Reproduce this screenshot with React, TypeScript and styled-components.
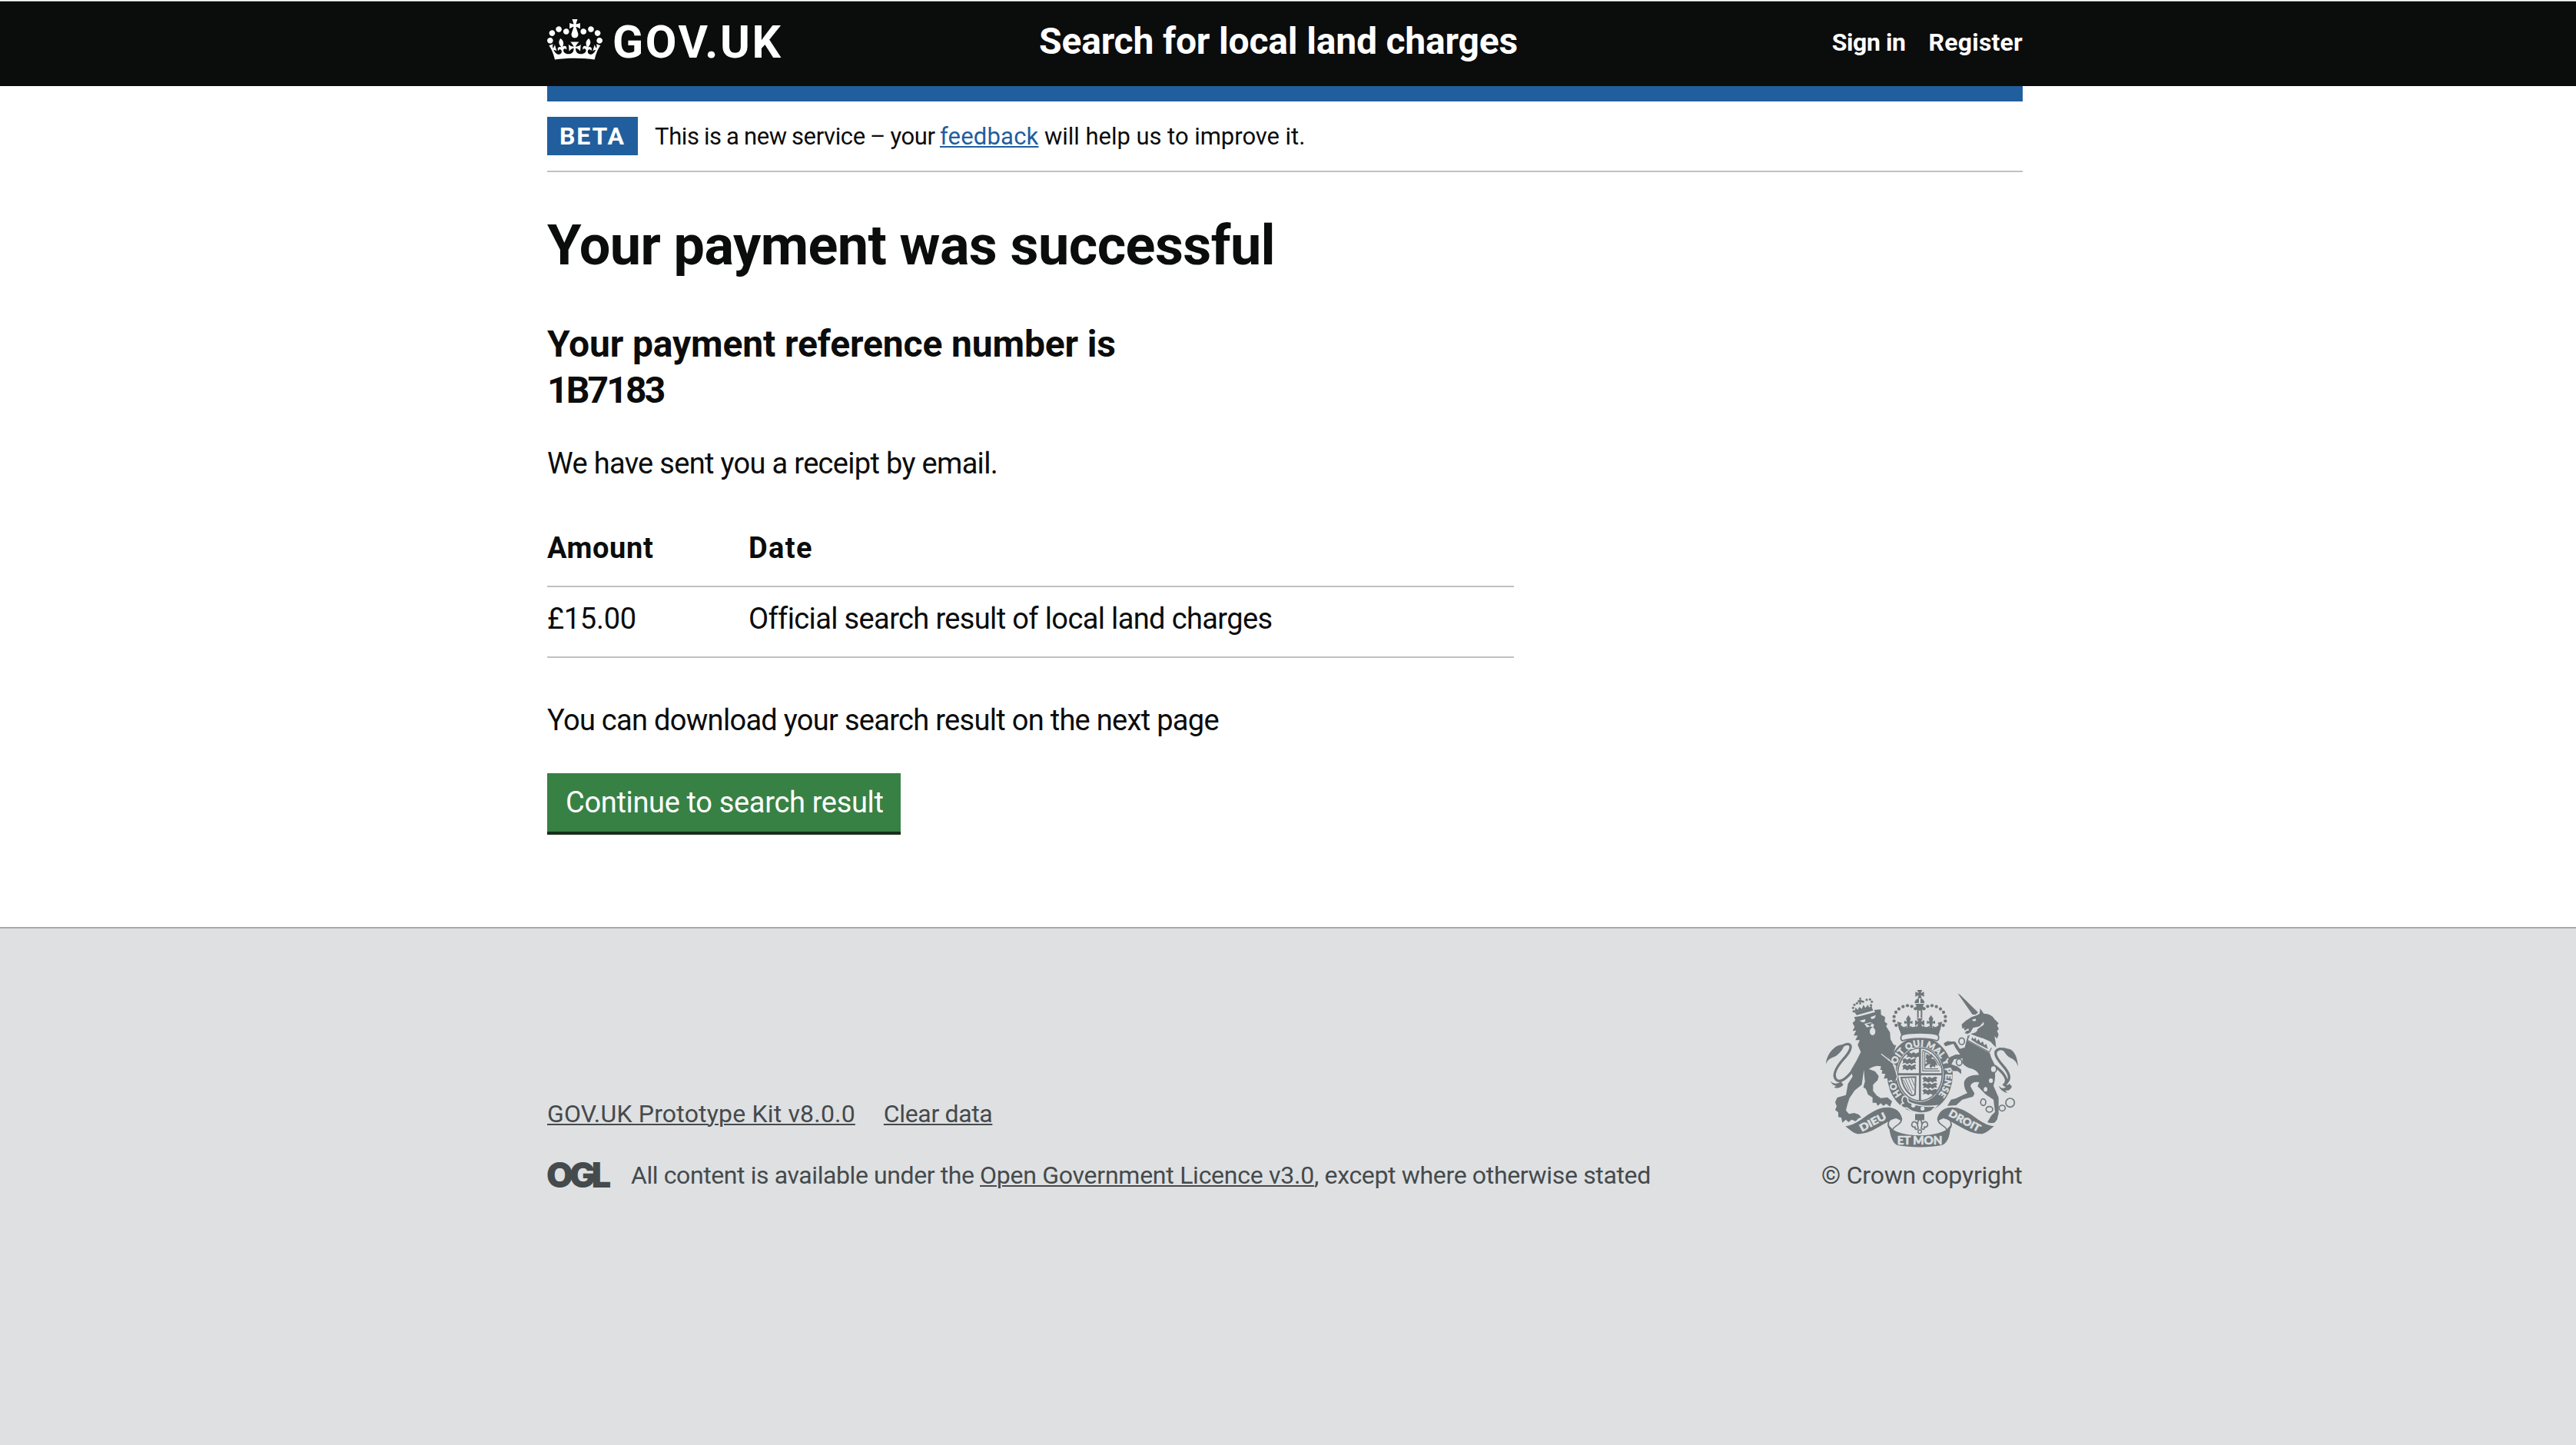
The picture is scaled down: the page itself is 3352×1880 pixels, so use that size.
import React from "react";
import styled, { createGlobalStyle } from "styled-components";

const ink = "#0b0c0c";
const footerInk = "#454a4c";
const footerBg = "#dee0e2";
const crestGrey = "#6f777b";
const blue = "#215e9e";
const rule = "#bfc1c3";

const GlobalStyle = createGlobalStyle`
  *, *::before, *::after { box-sizing: border-box; }
  body {
    margin: 0;
    background: #fff;
    color: ${ink};
    font-family: Roboto, "Liberation Sans", Arial, sans-serif;
    -webkit-font-smoothing: antialiased;
  }
`;

type Track = { $track?: number };

const Page = styled.div`
  display: flex;
  flex-direction: column;
  min-height: 1880px;
  border-top: 1px solid #fff;
`;

const Container = styled.div`
  width: 1920px;
  margin: 0 auto 0 712px;
`;

const Header = styled.header`
  height: 111px;
  border-top: 1px solid #b1b4b6;
  background: ${ink};
  color: #fff;
`;

const HeaderInner = styled(Container)`
  display: flex;
  align-items: flex-start;
`;

const LogoLink = styled.a`
  display: flex;
  flex: 0 0 640px;
  gap: 13px;
  padding-top: 23px;
  color: #fff;
`;

const CrownSvg = styled.svg`
  display: block;
  width: 72px;
  height: 53px;
`;

const LogoText = styled.span`
  font-size: 59px;
  font-weight: 700;
  line-height: 60px;
  letter-spacing: 2.6px;
`;

const ServiceName = styled.a`
  flex: 1;
  margin-top: 22px;
  font-size: 48px;
  font-weight: 700;
  line-height: 60px;
  letter-spacing: -0.17px;
`;

const Nav = styled.nav`
  display: flex;
  gap: 30px;
  margin-top: 33px;
`;

const NavLink = styled.a<Track>`
  font-size: 32px;
  font-weight: 700;
  line-height: 40px;
  letter-spacing: ${(p) => p.$track ?? 0}px;
`;

const BlueBar = styled.div`
  height: 20px;
  background: ${blue};
`;

const PhaseBanner = styled.div`
  display: flex;
  align-items: center;
  gap: 22px;
  height: 92px;
  padding: 20px 0;
  border-bottom: 2px solid ${rule};
`;

const Tag = styled.strong`
  width: 118px;
  padding: 0 16px;
  background: ${blue};
  color: #fff;
  font-size: 32px;
  line-height: 50px;
  letter-spacing: 1.9px;
`;

const PhaseText = styled.span`
  padding-top: 2px;
  font-size: 31px;
  line-height: 50px;
  white-space: pre;
`;

const Tracked = styled.span<Track & { $word?: number }>`
  letter-spacing: ${(p) => p.$track ?? 0}px;
  word-spacing: ${(p) => p.$word ?? 0}px;
`;

const Link = styled.a<Track & { $color: string }>`
  color: ${(p) => p.$color};
  letter-spacing: ${(p) => p.$track ?? 0}px;
  text-decoration: underline;
  text-decoration-thickness: 2px;
  text-underline-offset: 2px;
`;

const Main = styled.main`
  width: 1258px;
  height: 982px;
  padding-top: 56px;
`;

const Title = styled.h1`
  margin: 0 0 58px;
  font-size: 72px;
  line-height: 80px;
  letter-spacing: -0.58px;
`;

const Subtitle = styled.h2`
  margin: 0 0 40px;
  font-size: 48px;
  line-height: 60px;
  letter-spacing: -0.14px;
`;

const Paragraph = styled.p<Track>`
  margin: 0;
  font-size: 38px;
  line-height: 50px;
  letter-spacing: ${(p) => p.$track ?? 0}px;
`;

const Table = styled.div`
  margin: 44px 0 56px;
`;

const TableRow = styled.div<{ $head?: boolean }>`
  display: grid;
  grid-template-columns: 262px 1fr;
  padding: 16px 0 24px;
  border-bottom: 2px solid ${rule};
  font-size: 38px;
  font-weight: ${(p) => (p.$head ? 700 : 400)};
  line-height: 50px;
`;

const Button = styled.button`
  display: block;
  width: 460px;
  height: 80px;
  margin: 44px 0 0;
  padding: 13px 0 13px 24px;
  border: 0;
  border-bottom: 4px solid #14301a;
  background: #388144;
  color: #fff;
  font: 400 38px/50px Roboto, "Liberation Sans", sans-serif;
  letter-spacing: -0.33px;
  text-align: left;
  white-space: nowrap;
`;

const Footer = styled.footer`
  flex: 1;
  border-top: 2px solid #a1acb2;
  background: ${footerBg};
  color: ${footerInk};
  font-size: 32px;
  line-height: 40px;
`;

const FooterInner = styled(Container)`
  display: flex;
  justify-content: space-between;
  padding-top: 78px;
`;

const FooterMeta = styled.div`
  padding-top: 143px;
`;

const FooterLinks = styled.div`
  display: flex;
  gap: 37px;
  margin-bottom: 40px;
`;

const Licence = styled.div`
  display: flex;
  white-space: pre;
`;

const OglLogo = styled.span`
  width: 110px;
  margin-left: -1px;
  font-family: Inter, sans-serif;
  font-size: 45px;
  font-weight: 900;
  line-height: 40px;
  letter-spacing: -5px;
`;

const Copyright = styled.div`
  display: flex;
  flex-direction: column;
  width: 262px;
  letter-spacing: -0.2px;
  white-space: nowrap;
`;

const CrestSvg = styled.svg`
  display: block;
  width: 262px;
  height: 210px;
  margin-bottom: 13px;
`;

function Crown() {
  return (
    <CrownSvg viewBox="0 0 132 97" preserveAspectRatio="none" aria-hidden="true">
      <path
        fill="currentColor"
        fillRule="evenodd"
        d="M25 30.2c3.5 1.5 7.7-.2 9.1-3.7 1.5-3.6-.2-7.8-3.9-9.2-3.6-1.4-7.6.3-9.1 3.9-1.4 3.5.3 7.5 3.9 9zM9 39.5c3.6 1.5 7.8-.2 9.2-3.7 1.5-3.6-.2-7.8-3.9-9.1-3.6-1.5-7.6.2-9.1 3.8-1.4 3.5.3 7.5 3.8 9zM4.4 57.2c3.5 1.5 7.7-.2 9.1-3.8 1.5-3.6-.2-7.7-3.9-9.1-3.5-1.5-7.6.3-9.1 3.8-1.4 3.5.3 7.6 3.9 9.1zm38.3-21.4c3.5 1.5 7.7-.2 9.1-3.8 1.5-3.6-.2-7.7-3.9-9.1-3.6-1.5-7.6.3-9.1 3.8-1.3 3.6.4 7.7 3.9 9.1zm64.4-5.6c-3.6 1.5-7.8-.2-9.1-3.7-1.5-3.6.2-7.8 3.8-9.2 3.6-1.4 7.7.3 9.2 3.9 1.3 3.5-.4 7.5-3.9 9zm15.9 9.3c-3.6 1.5-7.7-.2-9.1-3.7-1.5-3.6.2-7.8 3.7-9.1 3.6-1.5 7.7.2 9.2 3.8 1.5 3.5-.3 7.5-3.8 9zm4.7 17.7c-3.6 1.5-7.8-.2-9.2-3.8-1.5-3.6.2-7.7 3.9-9.1 3.6-1.5 7.7.3 9.2 3.8 1.3 3.5-.4 7.6-3.9 9.1zM89.3 35.8c-3.6 1.5-7.8-.2-9.2-3.8-1.4-3.6.2-7.7 3.9-9.1 3.6-1.5 7.7.3 9.2 3.8 1.4 3.6-.3 7.7-3.9 9.1zM69.7 17.7l8.9 4.7V9.3l-8.9 2.8c-.2-.3-.5-.6-.9-.9L72.4 0H59.6l3.5 11.2c-.3.3-.6.5-.9.9l-8.8-2.8v13.1l8.8-4.7c.3.3.6.7.9.9l-5 15.4v.1c-.2.8-.4 1.6-.4 2.4 0 4.1 3.1 7.5 7 8.1h.2c.3 0 .7.1 1 .1.4 0 .7 0 1-.1h.2c4-.6 7.1-4.1 7.1-8.1 0-.8-.1-1.7-.4-2.4V34l-5.1-15.4c.4-.2.7-.6 1-.9zM66 92.8c16.9 0 32.8 1.1 47.1 3.2 4-16.9 8.9-26.7 14-33.5l-9.6-3.4c1 4.9 1.1 7.2 0 10.2-1.5-1.4-3-4.3-4.2-8.7L108.6 76c2.8-2 5-3.2 7.5-3.3-4.4 9.4-10 11.9-13.6 11.2-4.3-.8-6.3-4.6-5.6-7.9 1-4.7 5.7-5.9 8-.5 4.3-8.7-3-11.4-7.6-8.8 7.1-7.2 7.9-13.5 2.1-21.1-8 6.1-8.1 12.3-4.5 20.8-4.7-5.4-12.1-2.5-9.5 6.2 3.4-5.2 7.9-2 7.2 3.1-.6 4.3-6.4 7.8-13.5 7.2-10.3-.9-10.9-8-11.2-13.8 2.5-.5 7.1 1.8 11 7.3L80.2 60c-4.1 4.4-8 5.3-12.3 5.4 1.4-4.4 8-11.6 8-11.6H55.5s6.4 7.2 7.9 11.6c-4.2-.1-8-1-12.3-5.4l1.4 16.4c3.9-5.5 8.5-7.7 10.9-7.3-.3 5.8-.9 12.8-11.1 13.8-7.2.6-12.9-2.9-13.5-7.2-.7-5 3.8-8.3 7.1-3.1 2.7-8.7-4.6-11.6-9.4-6.2 3.7-8.5 3.6-14.7-4.6-20.8-5.8 7.6-5 13.9 2.2 21.1-4.7-2.6-11.9.1-7.7 8.8 2.3-5.5 7.1-4.2 8.1.5.7 3.3-1.3 7.1-5.7 7.9-3.5.7-9-1.8-13.5-11.2 2.5.1 4.7 1.3 7.5 3.3l-4.7-15.4c-1.2 4.4-2.7 7.2-4.3 8.7-1.1-3-.9-5.3 0-10.2l-9.5 3.4c5 6.9 9.9 16.7 14 33.5 14.8-2.1 30.8-3.2 47.7-3.2z"
      />
    </CrownSvg>
  );
}

const crownPearls = [
  [322, 192], [314, 175], [314, 158], [321, 141], [333, 128], [349, 119], [366, 115], [383, 118], [397, 127],
];

const smallPearls = [
  [156, 137], [154, 124], [159, 112], [169, 106], [193, 100], [207, 92], [220, 91], [227, 100], [224, 113],
];

const lion =
  "M152 183 L163 172 L158 160 L182 156 L240 140 L236 132 L262 130 L263 151 L279 160 L277 178 L288 186 L283 196 L298 220 L300 246 L312 268 L322 270 L304 288 L292 300 L290 318 L310 345 L320 378 L322 404 L312 411 L304 402 L292 406 L288 396 L277 397 L284 378 L270 380 L274 366 L260 366 L263 352 L246 350 L232 354 L215 362 L240 372 L254 390 L250 406 L232 424 L232 448 L246 466 L262 476 L288 473 L306 488 L298 510 L284 498 L272 506 L262 496 L250 506 L244 494 L230 494 L230 474 L212 462 L204 440 L194 434 L199 412 L197 392 L188 424 L160 446 L140 476 L132 500 L126 524 L138 538 L158 534 L176 540 L186 552 L176 554 L164 566 L148 560 L136 570 L126 560 L112 572 L108 552 L96 550 L96 532 L84 522 L90 508 L84 492 L92 474 L126 464 L134 420 L152 392 L146 366 L166 332 L184 296 L172 268 L180 250 L163 250 L172 232 L156 232 L166 212 L152 214 L160 198 Z";

const unicornHead =
  "M638 152 L648 146 L650 126 L664 146 Q680 146 690 152 Q702 158 706 168 L722 184 L716 192 L723 206 L716 214 L722 228 L716 244 L706 234 L710 256 L712 278 L700 266 L690 256 L664 244 L640 236 L612 226 L632 220 Q640 214 640 206 L664 190 L664 178 L648 196 L622 202 L612 220 L600 226 L590 222 L596 214 L606 212 L604 204 L590 212 L586 204 L596 200 L580 204 L578 188 L594 174 L616 160 Z";

const unicornBody =
  "M602 230 L640 252 L686 294 Q690 310 694 320 L712 356 L708 380 Q710 404 702 428 L722 474 L722 536 L716 560 L706 572 L690 574 L678 570 L694 544 L708 530 L702 482 L672 462 L640 430 L646 414 Q616 410 612 430 L628 458 L622 470 L580 482 L556 504 L522 506 L536 482 L554 478 L600 456 Q584 436 588 410 Q600 384 646 386 Q640 366 604 358 Q584 348 580 336 L582 318 L548 324 L538 344 L562 354 L576 366 L576 382 L562 370 L544 370 L524 342 L528 318 L556 306 L576 308 L554 280 L546 262 L514 272 L508 264 L522 254 L552 256 L570 284 L590 278 Z";

function Crest() {
  return (
    <CrestSvg viewBox="30 48 786 630" aria-hidden="true" fill={crestGrey}>
      <g fill="none" stroke={crestGrey}>
        <path strokeWidth="10" d="M154 366 C132 396 104 420 88 404 C72 386 90 354 116 324 C142 296 152 272 138 266 C124 262 108 274 96 284" />
        <path strokeWidth="10" d="M706 350 C744 378 764 408 744 424 C752 432 758 432 768 424 M744 424 C776 402 764 378 736 346 C708 314 700 292 726 284 C742 282 752 292 760 300" />
      </g>
      <path d="M48 344 C50 308 78 270 110 268 L118 272 C114 290 92 310 78 316 C62 322 52 330 48 344 Z" />
      <path d="M66 410 C76 420 92 424 106 410 L116 424 C104 440 88 438 80 434 L88 428 C76 426 70 420 66 410 Z" />
      <path d="M798 354 C796 320 786 296 768 286 L738 278 C744 300 756 314 774 322 C788 330 794 340 798 354 Z" />
      <path d="M722 428 C734 440 746 440 754 430 L774 428 C770 446 756 448 748 446 L756 456 C740 452 728 442 722 428 Z" />

      <path d={lion} />
      <g fill={footerBg}>
        <path d="M179 174 L201 168 L202 177 L192 181 Z M222 160 L243 152 L238 164 L226 168 Z" />
        <path d="M198 186 L222 180 L236 190 L232 202 L222 196 L208 200 Z" />
        <ellipse cx="230" cy="216" rx="11" ry="15" />
        <path d="M196 366 L200 412 L192 436 L188 424 Z" />
      </g>
      <path d="M206 187 L228 183 L220 196 Z" />
      <path d="M160 142 L228 124 L232 134 L168 152 Z M158 142 L164 122 L172 132 L178 120 L188 128 L194 112 L202 124 L212 112 L216 122 L226 116 L228 124 Z" />
      <path d="M178 84 L186 84 L184 94 L190 94 L190 102 L184 101 L186 110 L178 110 L178 101 L172 102 L172 94 L179 94 Z" />
      {smallPearls.map(([x, y]) => (
        <circle key={`${x}-${y}`} cx={x} cy={y} r="4.6" />
      ))}

      <path d="M563 68 L571 72 L642 142 L632 150 L620 150 Z" />
      <path d={unicornHead} />
      <path d="M618 170 L632 166 L634 174 L624 176 Z" fill={footerBg} />
      <path d={unicornBody} />
      <path d="M606 228 L700 284 L688 300 L600 252 Z" fill={footerBg} />
      <path d="M608 230 L600 250 L686 296 L694 280" fill="none" stroke={crestGrey} strokeWidth="3.5" />
      <path d="M616 248 L618 238 L626 246 L632 240 L636 254 L644 246 L652 262 L660 254 L666 270 L674 264 L680 284 L640 264 Z" />

      <ellipse cx="415" cy="385" rx="134" ry="152" fill={footerBg} />
      <path d="M290 298 L322 270 L300 330 L290 318 Z" />
      <ellipse cx="415" cy="385" rx="128" ry="148" />
      <ellipse cx="415" cy="383" rx="92" ry="108" fill={footerBg} />
      <ellipse cx="415" cy="383" rx="87" ry="103" fill="none" stroke={crestGrey} strokeWidth="5" />
      <path d="M411 280 h8 v206 h-8 Z M328 379 h174 v8 h-174 Z" />
      <path d="M426 290 V370 H492 M434 296 V362 H486 M426 290 Q470 306 492 350" fill="none" stroke={crestGrey} strokeWidth="3.5" />
      <path d="M440 304 l12 6 8 -6 6 10 -8 8 12 2 8 10 6 16 -8 -4 -2 10 -10 -4 -6 8 -6 -8 4 -10 -10 4 -12 8 -2 -8 12 -8 -8 -6 6 -6 -4 -8 Z" />
      {[298, 322, 346].map((y) => (
        <path key={y} d={`M${y === 298 ? 362 : 346} ${y + 4} l10 -6 10 6 8 -6 8 6 14 -6 4 4 -4 6 4 10 -10 -2 -8 6 -8 -6 -8 6 -10 -6 -10 4 4 -8 Z`} />
      ))}
      {[394, 418, 442].map((y) => (
        <path key={y} d={`M424 ${y + 4} l10 -6 10 6 8 -6 8 6 14 -6 10 4 -6 6 4 10 -10 -2 -8 6 -8 -6 -8 6 -10 -6 -12 4 4 -8 Z`} />
      ))}
      <path d="M342 396 L398 394 L396 462 Q384 470 376 460 Q350 440 342 396 Z" fill="none" stroke={crestGrey} strokeWidth="6" />
      <path d="M358 400 L384 458 M370 400 L390 446 M382 400 L394 428 M350 404 L372 448" stroke={crestGrey} strokeWidth="3" />

      <path id="garter" d="M344 463 A99 111 0 1 1 483 467" fill="none" />
      <text fill={footerBg} stroke={footerBg} strokeWidth="1.4" fontFamily="Lato, sans-serif" fontWeight="900" fontSize="35">
        <textPath href="#garter" textLength="496" lengthAdjust="spacing">HONI SOIT QUI MAL Y PENSE</textPath>
      </text>
      <path d="M258 300 L306 338 L322 376 L325 402 L312 414 L304 405 L292 409 L287 399 L274 400 L280 382 L266 380 L268 366 Z" />
      <path d="M264 304 L312 342 L327 392 L322 406" fill="none" stroke={footerBg} strokeWidth="4" />
      <path d="M350 470 Q366 466 368 484 Q368 492 376 494 Q430 514 480 506 L462 524 Q440 536 414 534 Q380 530 364 514 Q350 518 342 506 Q338 498 350 496 Q340 484 350 470 Z" stroke={footerBg} strokeWidth="5" />
      <circle cx="389" cy="505" r="8" fill={footerBg} />
      <circle cx="425" cy="517" r="8" fill={footerBg} />

      <path d="M508 262 L522 254 L552 256 L572 286 L600 290 L590 320 L548 324 L538 344 L562 354 L576 366 L576 382 L562 370 L544 370 L524 342 L528 318 L556 306 L572 306 L554 280 L546 264 L514 274 Z" />
      <g fill="none" stroke={crestGrey} strokeWidth="5">
        <ellipse cx="578" cy="254" rx="11" ry="13" fill={footerBg} />
        <ellipse cx="568" cy="336" rx="11" ry="13" fill={footerBg} />
        <ellipse cx="702" cy="363" rx="12" ry="14" fill={footerBg} />
        <ellipse cx="662" cy="492" rx="10" ry="13" />
        <ellipse cx="686" cy="520" rx="13" ry="11" />
        <ellipse cx="736" cy="515" rx="12" ry="11" />
        <circle cx="767" cy="494" r="17" />
      </g>
      <ellipse cx="692" cy="408" rx="8" ry="9" fill={footerBg} />
      <ellipse cx="671" cy="442" rx="7" ry="9" fill={footerBg} />

      <path d="M334 206 C356 196 472 196 494 206 L488 230 C450 220 378 220 342 230 Z" />
      <path d="M346 252 C338 248 338 230 350 228 C384 220 446 220 480 228 C492 232 490 248 482 252 C446 240 382 240 346 252 Z" fill={footerBg} stroke={crestGrey} strokeWidth="5" />
      <path d="M326 178 L344 182 L340 190 L352 206 L334 210 Z M502 178 L484 182 L488 190 L476 206 L494 210 Z" />
      <g fill="none" stroke={crestGrey} strokeWidth="5">
        <path d="M342 196 Q352 206 364 196 M376 196 Q388 208 402 196 M426 196 Q440 208 452 196 M464 196 Q476 206 486 196" />
      </g>
      <path d="M370 152 L379 166 L376 178 L386 174 L386 186 L376 184 L374 202 L366 202 L364 184 L354 186 L354 174 L364 178 L361 166 Z" />
      <path d="M458 152 L467 166 L464 178 L474 174 L474 186 L464 184 L462 202 L454 202 L452 184 L442 186 L442 174 L452 178 L449 166 Z" />
      <path d="M402 164 H426 L419 178 L432 172 V194 L420 186 L426 202 H402 L408 186 L396 194 V172 L409 178 Z" />
      {crownPearls.map(([x, y]) => (
        <g key={`${x}-${y}`}>
          <circle cx={x} cy={y} r="6.4" />
          <circle cx={828 - x} cy={y} r="6.4" />
        </g>
      ))}
      <path d="M402 112 H426 L430 126 L424 132 V162 H418 V134 H410 V162 H404 V132 L398 126 Z" />
      <path d="M394 105 Q396 88 411 88 V105 Z M433 105 Q431 88 417 88 V105 Z M396 108 H432 L428 114 H400 Z" />
      <path d="M404 54 H424 L418 67 L431 61 V80 L418 74 L422 86 H406 L410 74 L397 80 V61 L410 67 Z" />

      <path d="M124 586 C180 580 210 528 270 514 C310 506 340 524 346 558 C342 584 318 576 306 602 C294 600 286 588 290 574 C298 560 318 566 318 556 C252 584 226 616 170 616 C154 612 138 598 124 586 Z" />
      <path d="M704 586 C648 580 618 528 558 514 C518 506 488 524 482 558 C486 584 510 576 522 602 C534 600 542 588 538 574 C530 560 510 566 510 556 C576 584 602 616 658 616 C674 612 690 598 704 586 Z" />
      <path d="M292 584 C288 560 306 556 322 552 L342 562 C338 584 312 582 308 602 Z" fill={footerBg} stroke={crestGrey} strokeWidth="5" />
      <path d="M536 584 C540 560 522 556 506 552 L486 562 C490 584 516 582 520 602 Z" fill={footerBg} stroke={crestGrey} strokeWidth="5" />
      <path d="M294 586 C330 634 498 634 534 586 C532 630 520 654 500 660 C450 670 380 670 326 660 C308 652 298 622 294 586 Z" />
      <g fill={footerBg} stroke={footerBg} strokeWidth="1.6" fontFamily="Lato, sans-serif" fontWeight="900">
        <text fontSize="47" x="326" y="656" textLength="176" lengthAdjust="spacingAndGlyphs">ET MON</text>
        <text fontSize="40" transform="translate(188 608) rotate(-28)" textLength="112" lengthAdjust="spacingAndGlyphs">DIEU</text>
        <text fontSize="40" transform="translate(524 544) rotate(29)" textLength="134" lengthAdjust="spacingAndGlyphs">DROIT</text>
      </g>

      <path d="M396 538 H432 V562 H396 Z" />
      <path d="M414 552 L426 572 L422 590 H448 V598 H380 V590 H406 L402 572 Z" fill={crestGrey} stroke="none" opacity="0" />
      <path d="M414 556 C402 570 404 582 408 594 C402 602 390 596 398 588 C386 592 380 584 384 574 C390 564 402 568 406 580 M414 556 C426 570 424 582 420 594 C426 602 438 596 430 588 C442 592 448 584 444 574 C438 564 426 568 422 580" fill={footerBg} stroke={crestGrey} strokeWidth="5" />
      <circle cx="414" cy="607" r="7" fill={footerBg} stroke={crestGrey} strokeWidth="4" />
    </CrestSvg>
  );
}

export default function App() {
  return (
    <Page>
      <GlobalStyle />
      <Header>
        <HeaderInner>
          <LogoLink>
            <Crown />
            <LogoText>GOV.UK</LogoText>
          </LogoLink>
          <ServiceName>Search for local land charges</ServiceName>
          <Nav>
            <NavLink $track={-0.4}>Sign in</NavLink>
            <NavLink $track={0.2}>Register</NavLink>
          </Nav>
        </HeaderInner>
      </Header>

      <Container>
        <BlueBar />
        <PhaseBanner>
          <Tag>BETA</Tag>
          <PhaseText>
            <Tracked $track={-0.37} $word={-1}>{"This is a new service – your "}</Tracked>
            <Link $color={blue} $track={0.19}>feedback</Link>
            <Tracked $track={-0.04}>{" will help us to improve it."}</Tracked>
          </PhaseText>
        </PhaseBanner>

        <Main>
          <Title>Your payment was successful</Title>
          <Subtitle>
            Your payment reference number is
            <br />
            <Tracked $track={-2.8}>1B7183</Tracked>
          </Subtitle>
          <Paragraph $track={-0.68}>We have sent you a receipt by email.</Paragraph>
          <Table>
            <TableRow $head>
              <Tracked $track={0.6}>Amount</Tracked>
              <Tracked $track={1.4}>Date</Tracked>
            </TableRow>
            <TableRow>
              <Tracked $track={-0.3}>£15.00</Tracked>
              <Tracked $track={-0.63}>Official search result of local land charges</Tracked>
            </TableRow>
          </Table>
          <Paragraph $track={-0.7}>You can download your search result on the next page</Paragraph>
          <Button>Continue to search result</Button>
        </Main>
      </Container>

      <Footer>
        <FooterInner>
          <FooterMeta>
            <FooterLinks>
              <Link $color={footerInk} $track={0.18}>GOV.UK Prototype Kit v8.0.0</Link>
              <Link $color={footerInk} $track={-0.36}>Clear data</Link>
            </FooterLinks>
            <Licence>
              <OglLogo>OGL</OglLogo>
              <Tracked $track={-0.41}>{"All content is available under the "}</Tracked>
              <Link $color={footerInk} $track={-0.26}>Open Government Licence v3.0</Link>
              <Tracked $track={-0.34}>, except where otherwise stated</Tracked>
            </Licence>
          </FooterMeta>
          <Copyright>
            <Crest />
            <span>© Crown copyright</span>
          </Copyright>
        </FooterInner>
      </Footer>
    </Page>
  );
}
